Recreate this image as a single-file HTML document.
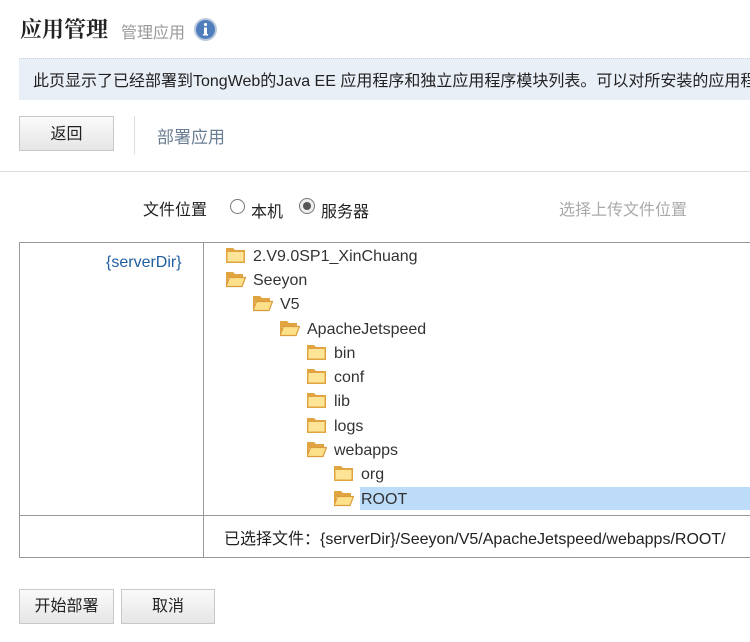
<!DOCTYPE html>
<html><head><meta charset="utf-8"><style>
*{margin:0;padding:0;box-sizing:border-box}
body{width:750px;height:642px;overflow:hidden;background:#fff;font-family:"Liberation Sans","Noto Sans CJK SC",sans-serif;font-size:16px;color:#333;position:relative}
.a{position:absolute;white-space:nowrap}
.btn{position:absolute;border:1px solid #c8c8c8;background:linear-gradient(#fafafa,#e6e6e6);text-align:center;font-size:16px;color:#222}
.row{position:absolute;height:22px;line-height:22px;font-size:16px;color:#333;white-space:nowrap}
.row svg{position:absolute;left:0;top:2px}
.row span{position:absolute;left:27px;top:1px}
</style></head><body>
<div class="a" style="left:20px;top:13px;font-family:'Noto Serif CJK SC',serif;font-size:22px;color:#222;font-weight:bold">应用管理</div>
<div class="a" style="left:121px;top:19px;font-size:16px;color:#999">管理应用</div>
<svg class="a" style="left:193px;top:17px" width="25" height="25" viewBox="0 0 25 25"><circle cx="12.5" cy="12.5" r="11.5" fill="#b9c9de"/><circle cx="12.5" cy="12.5" r="9.5" fill="#4f7ebc"/><circle cx="12.5" cy="7.5" r="1.6" fill="#fff"/><rect x="11" y="10.5" width="3" height="7.5" fill="#fff"/><rect x="10" y="17" width="5" height="1.5" fill="#fff"/></svg>
<div class="a" style="left:19px;top:58px;width:731px;height:42px;background:#e9eff7;border-top:1px dotted #c8d0dc"></div>
<div class="a" style="left:33px;top:67px;font-size:16px;color:#222">此页显示了已经部署到TongWeb的Java EE 应用程序和独立应用程序模块列表。可以对所安装的应用程序</div>
<div class="btn" style="left:19px;top:116px;width:95px;height:35px;line-height:35px">返回</div>
<div class="a" style="left:134px;top:116px;width:1px;height:38px;background:#ddd"></div>
<div class="a" style="left:157px;top:123px;font-size:17px;color:#6a7d93">部署应用</div>
<div class="a" style="left:0;top:171px;width:750px;height:1px;background:#ddd"></div>
<div class="a" style="left:143px;top:196px;font-size:16px;color:#222">文件位置</div>
<div class="a" style="left:230px;top:199px;width:15px;height:15px;border:1px solid #777;border-radius:50%;background:#fff"></div>
<div class="a" style="left:251px;top:198px;font-size:16px;color:#222">本机</div>
<div class="a" style="left:299px;top:198px;width:16px;height:16px;border:1px solid #777;border-radius:50%;background:#eee"><div style="position:absolute;left:3px;top:3px;width:8px;height:8px;border-radius:50%;background:#555"></div></div>
<div class="a" style="left:321px;top:198px;font-size:16px;color:#222">服务器</div>
<div class="a" style="left:559px;top:196px;font-size:16px;color:#aaa">选择上传文件位置</div>
<div class="a" style="left:19px;top:242px;width:740px;height:316px;border:1px solid #999"></div>
<div class="a" style="left:203px;top:242px;width:1px;height:316px;background:#999"></div>
<div class="a" style="left:19px;top:515px;width:740px;height:1px;background:#999"></div>
<div class="a" style="left:106px;top:254px;font-size:16px;color:#1f5f9f">{serverDir}</div>
<div class="a" style="left:360px;top:487px;width:390px;height:23px;background:#bcdcfa"></div>
<div class="a" style="left:224px;top:525px;font-size:16px;color:#222">已选择文件：{serverDir}/Seeyon/V5/ApacheJetspeed/webapps/ROOT/</div>
<div class="btn" style="left:19px;top:589px;width:95px;height:35px;line-height:33px">开始部署</div>
<div class="btn" style="left:121px;top:589px;width:94px;height:35px;line-height:33px">取消</div>
<div style="position:absolute;left:0;top:0">
<div class="row" style="left:226px;top:245px"><svg width="20" height="17" viewBox="0 0 20 17"><path d="M0 1h7l2 2h10v13H0z" fill="#e0a440"/><path d="M1.5 5h16v9.5h-16z" fill="#fde497"/></svg><span>2.V9.0SP1_XinChuang</span></div>
<div class="row" style="left:226px;top:269px"><svg width="20" height="17" viewBox="0 0 20 17"><path d="M0 1h7l2 2h8v4H2v9H0z" fill="#e0a440"/><path d="M3.5 6.5h16l-3.5 9H0z" fill="#fde08a" stroke="#dc9c3e" stroke-width="1.2"/></svg><span>Seeyon</span></div>
<div class="row" style="left:253px;top:293px"><svg width="20" height="17" viewBox="0 0 20 17"><path d="M0 1h7l2 2h8v4H2v9H0z" fill="#e0a440"/><path d="M3.5 6.5h16l-3.5 9H0z" fill="#fde08a" stroke="#dc9c3e" stroke-width="1.2"/></svg><span>V5</span></div>
<div class="row" style="left:280px;top:318px"><svg width="20" height="17" viewBox="0 0 20 17"><path d="M0 1h7l2 2h8v4H2v9H0z" fill="#e0a440"/><path d="M3.5 6.5h16l-3.5 9H0z" fill="#fde08a" stroke="#dc9c3e" stroke-width="1.2"/></svg><span>ApacheJetspeed</span></div>
<div class="row" style="left:307px;top:342px"><svg width="20" height="17" viewBox="0 0 20 17"><path d="M0 1h7l2 2h10v13H0z" fill="#e0a440"/><path d="M1.5 5h16v9.5h-16z" fill="#fde497"/></svg><span>bin</span></div>
<div class="row" style="left:307px;top:366px"><svg width="20" height="17" viewBox="0 0 20 17"><path d="M0 1h7l2 2h10v13H0z" fill="#e0a440"/><path d="M1.5 5h16v9.5h-16z" fill="#fde497"/></svg><span>conf</span></div>
<div class="row" style="left:307px;top:390px"><svg width="20" height="17" viewBox="0 0 20 17"><path d="M0 1h7l2 2h10v13H0z" fill="#e0a440"/><path d="M1.5 5h16v9.5h-16z" fill="#fde497"/></svg><span>lib</span></div>
<div class="row" style="left:307px;top:415px"><svg width="20" height="17" viewBox="0 0 20 17"><path d="M0 1h7l2 2h10v13H0z" fill="#e0a440"/><path d="M1.5 5h16v9.5h-16z" fill="#fde497"/></svg><span>logs</span></div>
<div class="row" style="left:307px;top:439px"><svg width="20" height="17" viewBox="0 0 20 17"><path d="M0 1h7l2 2h8v4H2v9H0z" fill="#e0a440"/><path d="M3.5 6.5h16l-3.5 9H0z" fill="#fde08a" stroke="#dc9c3e" stroke-width="1.2"/></svg><span>webapps</span></div>
<div class="row" style="left:334px;top:463px"><svg width="20" height="17" viewBox="0 0 20 17"><path d="M0 1h7l2 2h10v13H0z" fill="#e0a440"/><path d="M1.5 5h16v9.5h-16z" fill="#fde497"/></svg><span>org</span></div>
<div class="row" style="left:334px;top:488px"><svg width="20" height="17" viewBox="0 0 20 17"><path d="M0 1h7l2 2h8v4H2v9H0z" fill="#e0a440"/><path d="M3.5 6.5h16l-3.5 9H0z" fill="#fde08a" stroke="#dc9c3e" stroke-width="1.2"/></svg><span>ROOT</span></div>
</div>
</body></html>
